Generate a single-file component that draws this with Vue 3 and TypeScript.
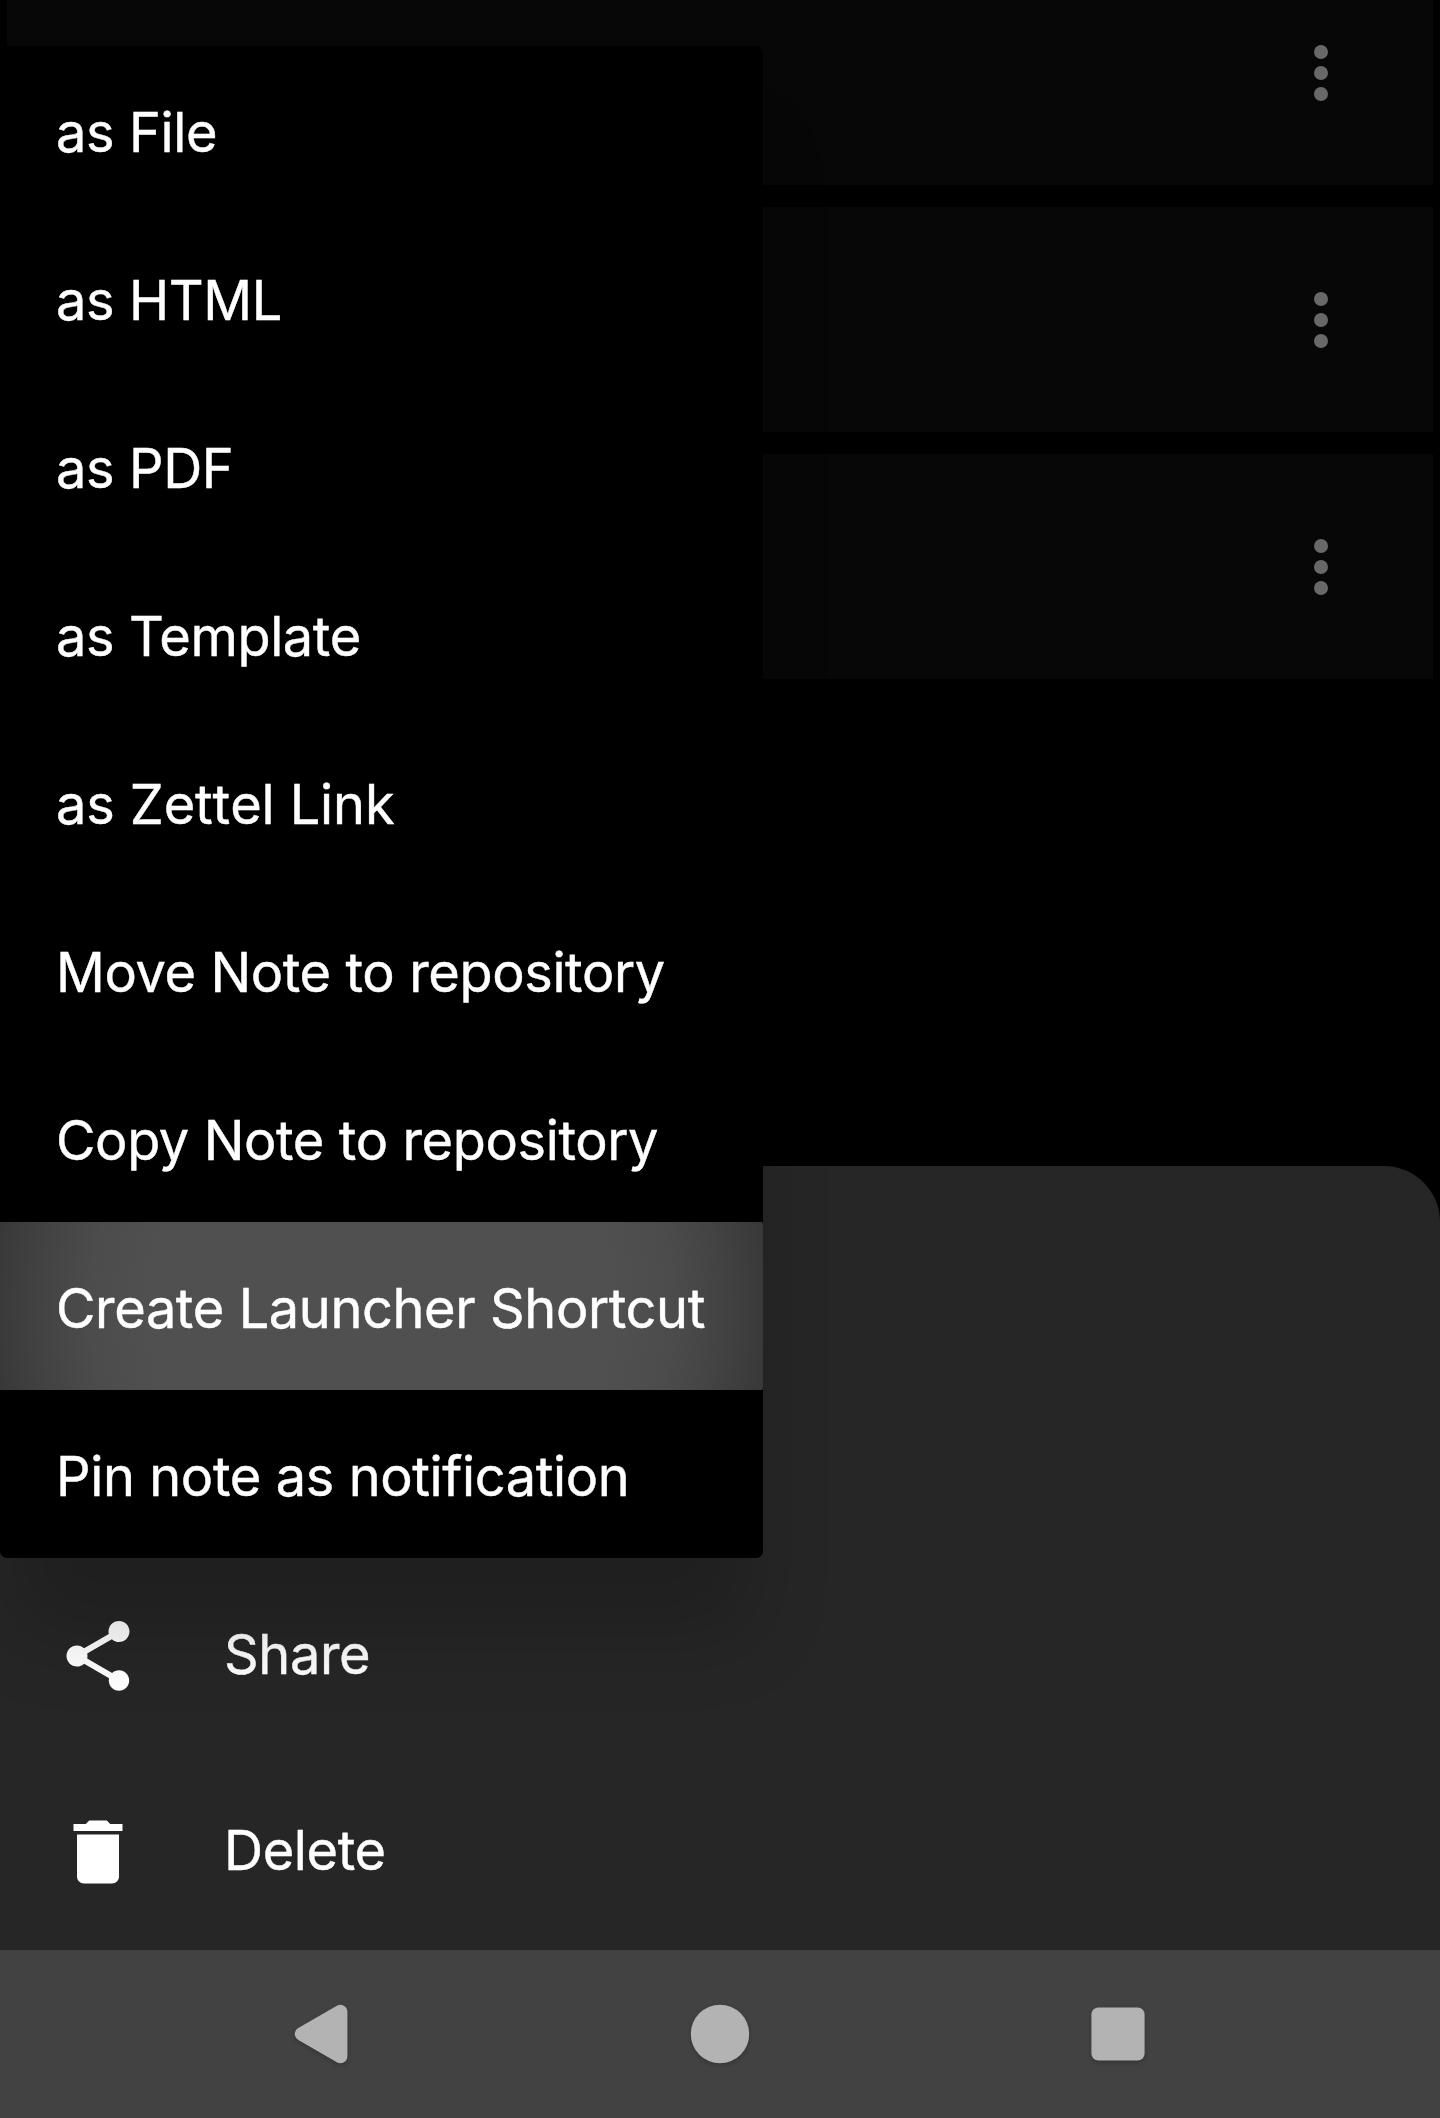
<script setup lang="ts">
interface MenuItem {
  label: string
  active?: boolean
  loose?: boolean
}

interface SheetAction {
  label: string
  icon: string
}

const cards = [1, 2, 3]

const menuItems: MenuItem[] = [
  { label: 'as File' },
  { label: 'as HTML' },
  { label: 'as PDF' },
  { label: 'as Template' },
  { label: 'as Zettel Link', loose: true },
  { label: 'Move Note to repository' },
  { label: 'Copy Note to repository' },
  { label: 'Create Launcher Shortcut', active: true },
  { label: 'Pin note as notification' },
]

const actions: SheetAction[] = [
  {
    label: 'Share',
    icon: 'M18 16.08c-.76 0-1.44.3-1.96.77L8.91 12.7c.05-.23.09-.46.09-.7s-.04-.47-.09-.7l7.05-4.11c.54.5 1.25.81 2.04.81 1.66 0 3-1.34 3-3s-1.34-3-3-3-3 1.34-3 3c0 .24.04.47.09.7L8.04 9.81C7.5 9.31 6.79 9 6 9c-1.66 0-3 1.34-3 3s1.34 3 3 3c.79 0 1.5-.31 2.04-.81l7.12 4.16c-.05.21-.08.43-.08.65 0 1.61 1.31 2.92 2.92 2.92s2.92-1.31 2.92-2.92-1.31-2.92-2.92-2.92z',
  },
  {
    label: 'Delete',
    icon: 'M6 19c0 1.1.9 2 2 2h8c1.1 0 2-.9 2-2V7H6v12zM19 4h-3.5l-1-1h-5l-1 1H5v2h14V4z',
  },
]
</script>

<template>
  <div class="screen">
    <main class="notes">
      <article v-for="card in cards" :key="card" class="card">
        <button class="more" aria-label="More options">
          <i></i><i></i><i></i>
        </button>
      </article>
    </main>

    <section class="sheet">
      <div v-for="action in actions" :key="action.label" class="action">
        <svg viewBox="0 0 24 24" aria-hidden="true"><path :d="action.icon" /></svg>
        <span class="label">{{ action.label }}</span>
      </div>
    </section>

    <nav class="navbar">
      <svg viewBox="0 0 98 98" aria-label="Back">
        <path d="M28.8 49 67.4 26.7V71.3Z" class="triangle" />
      </svg>
      <svg viewBox="0 0 98 98" aria-label="Home"><circle cx="49" cy="49" r="29.2" /></svg>
      <svg viewBox="0 0 98 98" aria-label="Recents">
        <rect x="22.4" y="22.4" width="53.2" height="53.2" rx="7" />
      </svg>
    </nav>

    <ul class="menu">
      <li v-for="item in menuItems" :key="item.label" :class="{ active: item.active }">
        <span class="label" :class="{ loose: item.loose }">{{ item.label }}</span>
      </li>
    </ul>
  </div>
</template>

<style>
body {
  margin: 0;
  background: #000;
}
</style>

<style scoped>
.screen {
  position: relative;
  display: flex;
  flex-direction: column;
  width: 1440px;
  height: 2118px;
  overflow: hidden;
  background: #000;
  color: #fff;
  font: 400 55px/56px Inter, Roboto, sans-serif;
}

/* Slightly condensed label face */
.label {
  display: inline-block;
  transform: scaleX(0.983);
  transform-origin: left center;
  font-variant-ligatures: none;
  letter-spacing: -0.38px;
  -webkit-text-stroke: 0.45px #fff;
}

.loose {
  font-kerning: none;
  letter-spacing: -0.12px;
}

.notes {
  display: flex;
  flex: 1;
  flex-direction: column;
  gap: 22px;
  min-height: 0;
  padding: 0 7px;
}

.card {
  display: flex;
  flex: none;
  align-items: center;
  justify-content: flex-end;
  box-sizing: border-box;
  height: 225px;
  padding: 1px 105px 0 0;
  background: #070707;
}

.card:first-child {
  margin-top: -40px;
}

.more {
  display: flex;
  flex-direction: column;
  gap: 7px;
  padding: 0;
  border: 0;
  background: none;
}

.more i {
  width: 14px;
  height: 14px;
  border-radius: 50%;
  background: #686868;
}

.sheet {
  display: flex;
  flex: none;
  flex-direction: column;
  justify-content: flex-end;
  height: 784px;
  border-radius: 56px 56px 0 0;
  background: #262626;
}

.action {
  display: flex;
  align-items: center;
  gap: 84px;
  height: 196px;
  padding-left: 56px;
}

.action svg {
  width: 84px;
  height: 84px;
  fill: #fff;
}

.action .label {
  margin-top: -4px;
}

.navbar {
  display: flex;
  flex: none;
  align-items: center;
  justify-content: center;
  gap: 300px;
  height: 168px;
  background: #424242;
}

.navbar svg {
  width: 98px;
  height: 98px;
  fill: #b3b3b3;
  filter: drop-shadow(0 2px 2px rgba(0, 0, 0, 0.2));
}

.triangle {
  stroke: #b3b3b3;
  stroke-width: 14px;
  stroke-linejoin: round;
}

.menu {
  position: absolute;
  top: 46px;
  left: 0;
  width: 763px;
  margin: 0;
  padding: 0;
  border-radius: 7px;
  background: #000;
  box-shadow: 0 88px 76px -14px rgba(0, 0, 0, 0.18);
  list-style: none;
}

.menu li {
  display: flex;
  align-items: center;
  box-sizing: border-box;
  height: 168px;
  padding: 4px 0 0 56px;
  white-space: nowrap;
}

.menu .active {
  border-radius: 0 1px 1px 0 / 0 5px 5px 0;
  background: radial-gradient(
    circle at 381px 84px,
    #505050 230px,
    #4c4c4c 290px,
    #434343 340px,
    #373737 395px
  );
}
</style>
